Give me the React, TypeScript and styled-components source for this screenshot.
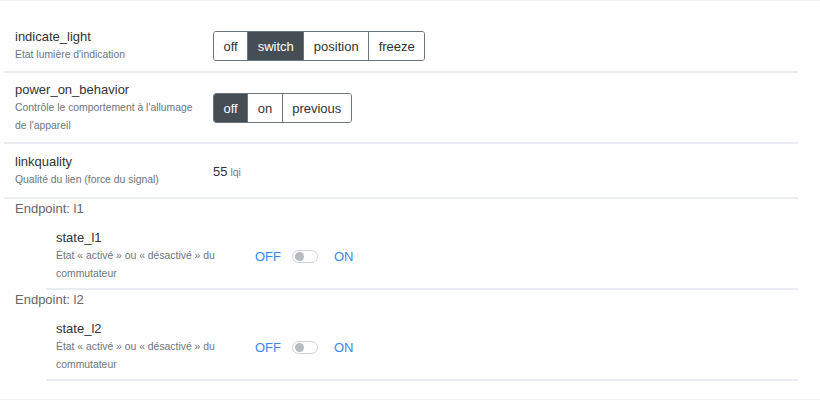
import React from "react";
import styled, { createGlobalStyle } from "styled-components";

const Global = createGlobalStyle`
  html, body { margin: 0; padding: 0; background: #fff; }
  body { font-family: "Liberation Sans", Arial, sans-serif; color: #333; }
`;

const Page = styled.div`
  width: 820px;
  height: 400px;
  box-sizing: border-box;
  border-top: 1px solid #f1f2f6;
  border-bottom: 1px solid #eef0f4;
  overflow: hidden;
`;

const List = styled.div`
  margin: 19px 22px 0 4px;
`;

const Row = styled.div<{ $sub?: boolean; $roomy?: boolean }>`
  display: flex;
  align-items: center;
  padding: ${(p) => (p.$sub ? "10px 0 5px" : p.$roomy ? "9px 0 8px" : "8px 0 7px")};
  padding-left: ${(p) => (p.$sub ? "10px" : "11px")};
  margin-left: ${(p) => (p.$sub ? "42px" : "0")};
  border-bottom: 2px solid #e9edf2;
`;

const Label = styled.div<{ $sub?: boolean }>`
  width: ${(p) => (p.$sub ? "199px" : "198px")};
  flex: none;
`;

const Title = styled.div`
  font-size: 13px;
  line-height: 18px;
  color: #333;
`;

const Desc = styled.div`
  font-size: 10.4px;
  line-height: 18px;
  color: #6c757d;
`;

const Group = styled.div`
  display: inline-flex;
  border: 1px solid #6c757d;
  border-radius: 3px;
  overflow: hidden;
`;

const Btn = styled.button<{ $active?: boolean }>`
  font-family: inherit;
  font-size: 13px;
  height: 28px;
  padding: 0 9.5px;
  margin: 0;
  border: none;
  border-left: 1px solid #6c757d;
  background: ${(p) => (p.$active ? "#454d55" : "#fff")};
  color: ${(p) => (p.$active ? "#fff" : "#333")};
  &:first-child { border-left: none; }
`;

const Value = styled.span`
  font-size: 13px;
  color: #333;
`;

const Unit = styled.span`
  font-size: 10.4px;
  color: #6c7a8a;
  margin-left: 3px;
`;

const Endpoint = styled.div`
  font-size: 13px;
  line-height: 18px;
  color: #666;
  padding: 1px 0 0 11px;
  margin-bottom: 1px;
`;

const ToggleWrap = styled.div`
  display: flex;
  align-items: center;
`;

const ToggleText = styled.span`
  font-size: 13px;
  color: #3b86f5;
`;

const Switch = styled.span`
  position: relative;
  width: 24px;
  height: 11px;
  border: 1px solid #cfd3d7;
  border-radius: 7px;
  margin: 0 16px 0 11px;
  background: #fff;
  &::after {
    content: "";
    position: absolute;
    left: 2px;
    top: 1px;
    width: 9px;
    height: 9px;
    border-radius: 50%;
    background: #b8bcc0;
  }
`;

const Radio = ({ options, active }: { options: string[]; active: string }) => (
  <Group>
    {options.map((o) => (
      <Btn key={o} $active={o === active}>
        {o}
      </Btn>
    ))}
  </Group>
);

const Toggle = () => (
  <ToggleWrap>
    <ToggleText>OFF</ToggleText>
    <Switch />
    <ToggleText>ON</ToggleText>
  </ToggleWrap>
);

export default function App() {
  return (
    <>
      <Global />
      <Page>
        <List>
          <Row>
            <Label>
              <Title>indicate_light</Title>
              <Desc>Etat lumière d'indication</Desc>
            </Label>
            <Radio options={["off", "switch", "position", "freeze"]} active="switch" />
          </Row>
          <Row>
            <Label>
              <Title>power_on_behavior</Title>
              <Desc>
                Contrôle le comportement à l'allumage
                <br />
                de l'appareil
              </Desc>
            </Label>
            <Radio options={["off", "on", "previous"]} active="off" />
          </Row>
          <Row $roomy>
            <Label>
              <Title>linkquality</Title>
              <Desc>Qualité du lien (force du signal)</Desc>
            </Label>
            <Value>
              55<Unit>lqi</Unit>
            </Value>
          </Row>
          <Endpoint>Endpoint: l1</Endpoint>
          <Row $sub>
            <Label $sub>
              <Title>state_l1</Title>
              <Desc>
                État « activé » ou « désactivé » du
                <br />
                commutateur
              </Desc>
            </Label>
            <Toggle />
          </Row>
          <Endpoint>Endpoint: l2</Endpoint>
          <Row $sub>
            <Label $sub>
              <Title>state_l2</Title>
              <Desc>
                État « activé » ou « désactivé » du
                <br />
                commutateur
              </Desc>
            </Label>
            <Toggle />
          </Row>
        </List>
      </Page>
    </>
  );
}
